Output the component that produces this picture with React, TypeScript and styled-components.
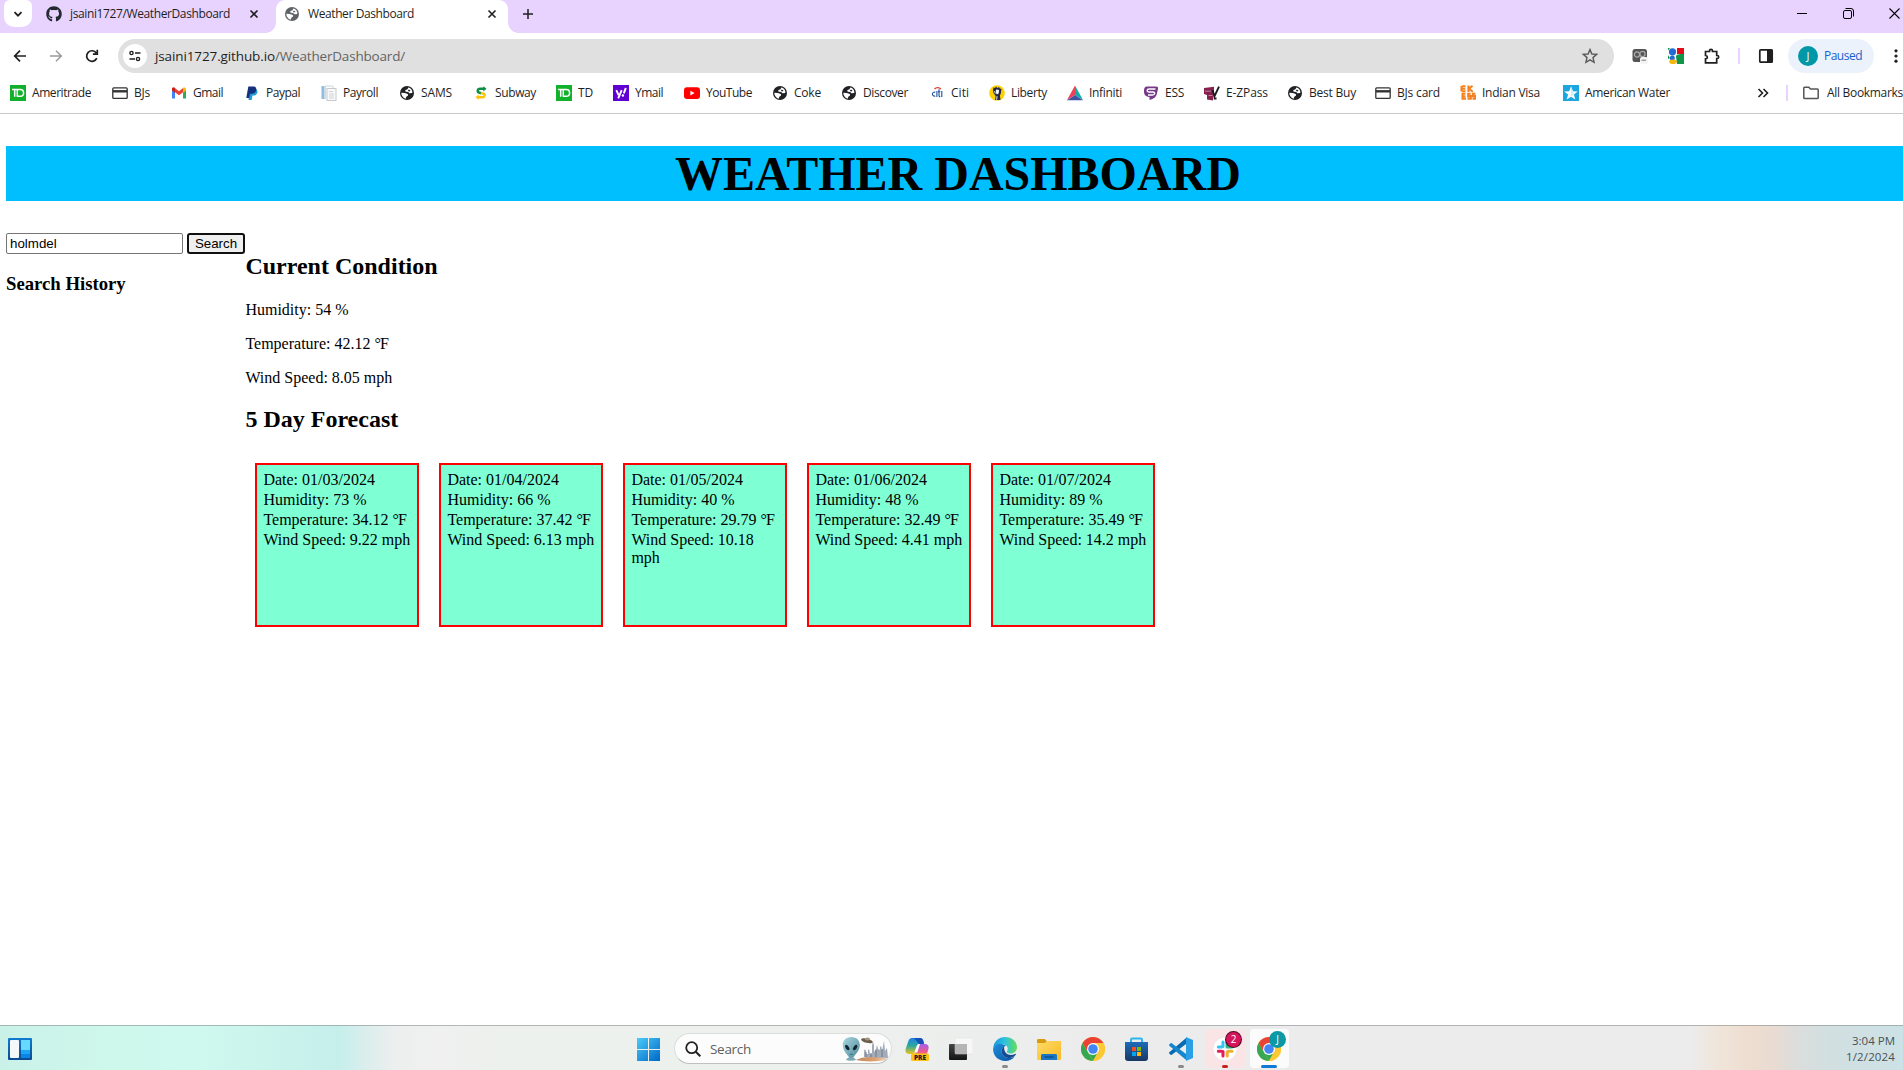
import React, { useLayoutEffect, useRef, useState } from 'react';
import styled, { createGlobalStyle, css } from 'styled-components';
import { FaGithub } from 'react-icons/fa';

const UI = `"Open Sans", "Noto Sans", "Liberation Sans", sans-serif`;
const SERIF = `"Liberation Serif", "Times New Roman", serif`;

const GlobalStyle = createGlobalStyle`
  html, body { margin: 0; padding: 0; overflow: hidden; background: #fff; }
  *, *::before, *::after { box-sizing: border-box; }
  svg { display: block; flex: none; }
`;

/* ---------- shared ---------- */

const Text = styled.span<{ $size?: number; $color?: string }>`
  display: inline-block;
  white-space: pre;
  font-family: ${UI};
  font-size: ${p => p.$size ?? 12}px;
  line-height: 16px;
  color: ${p => p.$color ?? '#1f1f1f'};
`;

/* Label whose tracking is adjusted so that it fills a given width. */
function Label({ width, size, color, children }: { width: number; size?: number; color?: string; children: React.ReactNode }) {
  const ref = useRef<HTMLSpanElement>(null);
  const [spacing, setSpacing] = useState(0);
  useLayoutEffect(() => {
    const el = ref.current;
    if (!el) return;
    const count = (el.textContent ?? '').length;
    setSpacing((width - el.getBoundingClientRect().width) / Math.max(1, count));
  }, [width]);
  return (
    <Text ref={ref} $size={size} $color={color} style={{ letterSpacing: `${spacing}px` }}>
      {children}
    </Text>
  );
}

/* ---------- browser frame ---------- */

const Screen = styled.div`
  width: 1903px;
  height: 1070px;
  display: flex;
  flex-direction: column;
  overflow: hidden;
  background: #fff;
`;

const TabStrip = styled.div`
  height: 33px;
  flex: none;
  display: flex;
  align-items: flex-start;
  background: #e8d3ff;
`;

const TabSearch = styled.div`
  width: 28px;
  height: 27px;
  margin-left: 4px;
  border-radius: 6px 6px 10px 10px;
  background: #fff;
  display: grid;
  place-items: center;
`;

const Tab = styled.div<{ $active?: boolean; $width: number }>`
  width: ${p => p.$width}px;
  height: 33px;
  display: flex;
  align-items: center;
  padding: ${p => (p.$active ? '0 11px 6px 8px' : '0 17px 6px 14px')};
  position: relative;
  ${p => p.$active && css`
    background: #fff;
    border-radius: 9px 9px 0 0;
    &::before, &::after {
      content: '';
      position: absolute;
      bottom: 0;
      width: 10px;
      height: 10px;
    }
    &::before { left: -10px; background: radial-gradient(circle at 0 0, #e8d3ff 9.5px, #fff 10px); }
    &::after { right: -10px; background: radial-gradient(circle at 100% 0, #e8d3ff 9.5px, #fff 10px); }
  `}
`;

const TabTitle = styled.div`
  flex: 1;
  margin-left: 8px;
  display: flex;
`;

const NewTab = styled.div`
  width: 28px;
  height: 27px;
  margin-left: 6px;
  display: grid;
  place-items: center;
`;

const WindowButtons = styled.div`
  margin-left: auto;
  margin-right: -14px;
  display: flex;
  height: 27px;
`;

const WindowButton = styled.div`
  width: 46px;
  display: grid;
  place-items: center;
`;

const Toolbar = styled.div`
  height: 46px;
  flex: none;
  display: flex;
  align-items: center;
  background: #fff;
  > * { flex: none; }
`;

const NavButton = styled.div`
  width: 36px;
  display: grid;
  place-items: center;
`;

const NavGroup = styled.div`
  display: flex;
  padding-left: 2px;
  width: 118px;
`;

const Omnibox = styled.div`
  width: 1496px;
  height: 34px;
  padding: 0 15px 0 5px;
  border-radius: 17px;
  background: #e0e0e0;
  display: flex;
  align-items: center;
  justify-content: space-between;
`;

const Address = styled.div`
  display: flex;
  align-items: center;
  gap: 8px;
`;

const SiteInfo = styled.div`
  width: 24px;
  height: 24px;
  border-radius: 50%;
  background: #fff;
  display: grid;
  place-items: center;
`;

const Extensions = styled.div`
  display: flex;
  padding-left: 8px;
`;

const Divider = styled.div<{ $gap: number }>`
  width: 2px;
  height: 16px;
  margin: 0 ${p => p.$gap}px;
  background: #e8d3ff;
`;

const Profile = styled.div`
  width: 86px;
  height: 34px;
  margin-left: 4px;
  padding-left: 10px;
  border-radius: 17px;
  background: #ebf2fb;
  display: flex;
  align-items: center;
  gap: 6px;
`;

const Avatar = styled.div`
  width: 20px;
  height: 20px;
  border-radius: 50%;
  background: #0097a7;
  color: #fff;
  font: 11px/20px ${UI};
  text-align: center;
`;

const Menu = styled.div`
  width: 44px;
  height: 20px;
  display: grid;
  place-items: center;
`;

const BookmarksBar = styled.div`
  height: 35px;
  flex: none;
  display: flex;
  align-items: center;
  padding: 0 0 6px 10px;
  border-bottom: 1px solid #c9c9c9;
  background: #fff;
  > * { flex: none; }
`;

const Bookmark = styled.div<{ $pitch: number }>`
  width: ${p => p.$pitch}px;
  display: flex;
  align-items: center;
  gap: 6px;
`;

const Overflow = styled.div`
  width: 16px;
  margin-left: 86px;
`;

const AllBookmarks = styled.div`
  display: flex;
  align-items: center;
  gap: 8px;
`;

/* ---------- icons ---------- */

const Icon = ({ size = 16, box = 16, children }: { size?: number; box?: number; children: React.ReactNode }) => (
  <svg width={size} height={size} viewBox={`0 0 ${box} ${box}`} fill="none">{children}</svg>
);

const Close = () => (
  <Icon size={10} box={10}><path d="M1.5 1.5l7 7M8.5 1.5l-7 7" stroke="#1f1f1f" strokeWidth="1.6" /></Icon>
);

const Globe = ({ color = '#202124' }: { color?: string }) => (
  <Icon>
    <circle cx="8" cy="8" r="7" fill={color} />
    <path d="M9.300 2.500l-.8 1.700-1.900.8c-.7.5-.4 1.600.5 1.800l2 .2 1.400 1.200 2.800-.3c.4-2.500-1.300-4.900-4-5.400z" fill="#fff" />
    <path d="M2.300 7.800l3.400.2 2.500.8c1.300.6 1.200 1.600.2 2.200l-1.100.8-.5 2C4.200 13.200 2.200 10.700 2.300 7.800z" fill="#fff" />
    <path d="M9.800 4.600l1.700.9-1.200.9-1.500-.3z" fill={color} />
  </Icon>
);

const TdIcon = () => (
  <Icon>
    <rect width="16" height="16" fill="#12b12c" />
    <path d="M2 4.400h6.500M4.700 4.400v7.300M7.300 4.400v7.300M7 11.200h3.200c2.200 0 3.400-1.200 3.400-3.300s-1.200-3.500-3.400-3.500H7.500" stroke="#fff" strokeWidth="1.500" />
  </Icon>
);

const CardIcon = () => (
  <Icon>
    <rect x=".8" y="2.800" width="14.400" height="10.600" rx="1" stroke="#333" strokeWidth="1.300" />
    <path d="M1 6.300h14" stroke="#333" strokeWidth="2.400" />
  </Icon>
);

const GmailIcon = () => (
  <Icon>
    <path d="M1 4v9.500h3V7z" fill="#4285f4" />
    <path d="M15 4v9.500h-3V7z" fill="#34a853" />
    <path d="M1 4c0-1.600 1.600-1.900 2.600-1.200L8 6.200l4.400-3.400V7L8 10.300 4 7.200 1 5.300z" fill="#ea4335" />
    <path d="M12 3.100c1.300-1 3-.4 3 1.200v1.200l-3 2.300z" fill="#fbbc04" />
    <path d="M1 4.300V5.500l3 2.300V3.100C2.600 2 1 2.700 1 4.300z" fill="#c5221f" />
  </Icon>
);

const PaypalIcon = () => (
  <Icon>
    <path d="M5.500 4h6.200c2 .7 2 2.600 1.400 4.200-.7 1.700-2.300 2.300-4.600 2.300L7.600 15H4.500z" fill="#1f9cd8" />
    <path d="M4.300 1.500h4.900c2.500 0 3.500 1.600 3 3.700-.5 2.400-2.200 3.500-4.600 3.500H6L5.200 13H2.300z" fill="#15317d" />
  </Icon>
);

const PayrollIcon = () => (
  <Icon>
    <rect x=".5" y="1" width="3" height="13" fill="#8fbde0" />
    <path d="M4.500 1h7.500v4M4.500 1v13" stroke="#cfd6dc" />
    <rect x="6" y="3.500" width="9" height="12" fill="#fafafa" stroke="#c4cad0" />
    <path d="M8 6.500h4M8 9h5M8 11h5M8 13h5" stroke="#cdd2d6" />
  </Icon>
);

const SubwayIcon = () => (
  <Icon>
    <path d="M11.500 3.800H7C4.300 3.800 4 6.800 6 7.500l2.500.8" stroke="#0a8f45" strokeWidth="2.400" />
    <path d="M10.300 1.200l3.200 2.600-3.200 2.600z" fill="#0a8f45" />
    <path d="M4.500 12.200h4.800c2.700 0 3-2.900 1-3.600L7.800 7.800" stroke="#ffc20a" strokeWidth="2.400" />
    <path d="M5.700 9.600l-3.200 2.600 3.200 2.600z" fill="#ffc20a" />
  </Icon>
);

const YahooIcon = () => (
  <Icon>
    <rect width="16" height="16" fill="#6001d2" />
    <path d="M3.300 5.200l2.300 5M8.700 5.200l-3.500 8.200" stroke="#fff" strokeWidth="1.900" />
    <path d="M12.800 3l-2 5.400" stroke="#fff" strokeWidth="2" />
    <circle cx="9.900" cy="10.500" r="1.200" fill="#fff" />
  </Icon>
);

const YoutubeIcon = () => (
  <Icon>
    <rect y="2.200" width="16" height="11.800" rx="3" fill="#f00" />
    <path d="M6.400 5.700l4.200 2.400-4.200 2.400z" fill="#fff" />
  </Icon>
);

const CitiIcon = () => (
  <Icon>
    <path d="M5.500 4.200c1.600-2.200 4.800-2.200 6.400 0" stroke="#e0352b" strokeWidth="1.200" />
    <path d="M6.300 7.300a2 2 0 1 0 0 3.600M7.900 6v6M10 4.300v6.200c0 1 .6 1.300 1.300 1M9 6.700h2.400M12.800 6v6" stroke="#1f4e9e" strokeWidth="1.100" />
  </Icon>
);

const LibertyIcon = () => (
  <Icon>
    <circle cx="8" cy="8" r="7.800" fill="#ffd000" />
    <path d="M4.500 2.500l1.500.5 1-1.500L8.200 3 10 2l.8 1.500 1.700.6-.7 4.400-.9 2 .6 4.500H6l.7-4L4.500 8l-.5-3z" fill="#22284c" />
    <path d="M7.300 5l2.300.2-.5 3.300-1.300.4zM5.700 6l.5 2.500M8 11.200l-.4 3.500" stroke="#fff" strokeWidth=".9" fill="#fff" />
  </Icon>
);

const InfinitiIcon = () => (
  <Icon>
    <path d="M8 .5L8 10 0 15z" fill="#ef4056" />
    <path d="M8 .5l8 14.500-8-5z" fill="#11ada5" />
    <path d="M8 10l8 5.300H0z" fill="#3f51a3" />
  </Icon>
);

const EssIcon = () => (
  <Icon>
    <path d="M4 1.500h9c2 0 2.300 1.300 2 2.500l-1.200 5C13 12.500 10 14 6.500 15V12C2 11.500.8 9 1 5.500c.1-2.500 1-4 3-4z" fill="#753a88" />
    <path d="M12.500 4H6.200C3.500 4 3.500 7 6 7h4c2.500 0 2 3-.5 3H5" stroke="#fff" strokeWidth="1.400" />
  </Icon>
);

const EzPassIcon = () => (
  <Icon>
    <path d="M0 3l10-1.200V8l-1 7.500-6-1V10L0 9z" fill="#86204f" />
    <path d="M1 6.200h6M4.500 10.500h4" stroke="#c98aa8" strokeWidth=".9" />
    <path d="M8.500 5.200l2 6L15 1.700M10 13.500h2.500" stroke="#1c1a1d" strokeWidth="1.900" />
  </Icon>
);

const IndianVisaIcon = () => (
  <Icon>
    <path d="M1.500 1v5.500M5.500 1.200H2M5.300 3.800H2M5.500 6.300H2M8.500.5v6.500M12.500.8L9 3.700l3.800 3M5.500 8.800H2.500v4.800h3.500M5.500 11.200H2M10.700 8.800H8.200v2.300h2.600v2.500H7.500M15.500 8.800h-2.600v2.300h2.600v2.500h-3" stroke="#f58220" strokeWidth="2.100" />
  </Icon>
);

const WaterIcon = () => (
  <Icon>
    <rect width="16" height="16" fill="#1ca6df" />
    <path d="M8 1.500l1.800 4.700 5 .2-3.900 3.200 1.400 5L8 11.800 3.700 14.600l1.400-5L1.200 6.400l5-.2z" fill="#fff" />
    <path d="M8 1.500v10.300l3.200-2.300z" fill="#d3effa" />
  </Icon>
);

const Star = () => (
  <Icon size={18} box={18}>
    <path d="M9 2.600l1.900 4.400 4.800.4-3.700 3.200 1.100 4.700L9 12.800l-4.100 2.500L6 10.600 2.300 7.400l4.800-.4z" stroke="#5a5a5a" strokeWidth="1.400" />
  </Icon>
);

const ChromeLogo = () => (
  <Icon size={24} box={24}>
    <circle cx="12" cy="12" r="12" fill="#fcc934" />
    <path d="M1.600 6L6.800 15 12 24A12 12 0 0 1 1.600 6z" fill="#34a853" />
    <path d="M6.800 15L12 24l5.200-9z" fill="#34a853" />
    <path d="M17.200 15L12 24A12 12 0 0 0 22.400 6H12z" fill="#fcc934" />
    <path d="M1.600 6A12 12 0 0 1 22.400 6H12L6.800 15z" fill="#ea4335" />
    <circle cx="12" cy="12" r="6" fill="#fff" />
    <circle cx="12" cy="12" r="4.800" fill="#4285f4" />
  </Icon>
);

/* ---------- page ---------- */

const Page = styled.main`
  flex: 1;
  padding: 32px 0 0 6px;
  overflow: hidden;
  font-family: ${SERIF};
  font-size: 16px;
  line-height: 18px;
  color: #000;
`;

const Banner = styled.h1`
  width: 1904px;
  height: 55px;
  margin: 0 0 32px;
  background: #00bfff;
  font-size: 48px;
  line-height: 55px;
  font-weight: 700;
  text-align: center;
`;

const Columns = styled.div`
  display: flex;
`;

const Sidebar = styled.aside`
  width: 239.4px;
`;

const SearchForm = styled.div`
  display: flex;
  gap: 4px;
  height: 21px;
`;

const SearchInput = styled.input`
  width: 177px;
  height: 21px;
  padding: 1px 3px;
  border: 1px solid #767676;
  border-radius: 2px;
  font: 13.333px "Liberation Sans", Arial, sans-serif;
  color: #000;
  background: #fff;
`;

const SearchButton = styled.button`
  width: 58px;
  height: 21px;
  padding: 0;
  border: 2px solid #101010;
  border-radius: 3px;
  background: #efefef;
  font: 13.333px "Liberation Sans", Arial, sans-serif;
  color: #000;
`;

const HistoryTitle = styled.h3`
  margin: 19px 0 0;
  font-size: 18.72px;
  line-height: 22px;
`;

const Content = styled.section`
  padding-top: 19px;
`;

const SectionTitle = styled.h2`
  margin: 0 0 20px;
  font-size: 24px;
  line-height: 28px;
`;

const Readings = styled.div`
  display: flex;
  flex-direction: column;
  gap: 16px;
  padding-top: 0.5px;
  margin-bottom: 18.5px;
`;

const Degree = styled.span`
  letter-spacing: -0.8px;
`;

const Forecast = styled.div`
  display: flex;
  gap: 20px;
  padding: 10px;
  margin-left: -0.4px;
`;

const DayCard = styled.div`
  width: 164px;
  height: 164px;
  padding: 6px 6px 6px 6.4px;
  border: 2px solid #f00;
  background: #7fffd4;
  display: flex;
  flex-direction: column;
  gap: 2px;
`;

/* ---------- taskbar ---------- */

const Taskbar = styled.footer`
  height: 45px;
  flex: none;
  display: flex;
  align-items: stretch;
  border-top: 1px solid rgba(120, 125, 125, 0.5);
  background: linear-gradient(90deg,
    #c9f1e8 0, #cff8ec 110px, #cff9ef 200px, #c8f2eb 290px, #c6efec 340px,
    #dceeec 368px, #ecefee 395px, #f0f0f0 430px, #ecf1ed 500px, #edf1ee 800px, #ececec 1100px,
    #ececec 1690px, #f0e4d9 1720px, #eeddd0 1750px, #e8dbd2 1775px, #dcdddc 1795px, #d2dfe1 1830px, #cce2e6 1903px);
`;

const Widgets = styled.div`
  width: 626px;
  padding: 12px 0 0 8px;
`;

const Slot = styled.div<{ $tint?: string }>`
  width: 44px;
  position: relative;
  display: flex;
  justify-content: center;
  padding-top: 11px;
  ${p => p.$tint && css`
    &::before {
      content: '';
      position: absolute;
      inset: 3px 2px 2px 3px;
      border-radius: 4px;
      background: ${p.$tint};
    }
  `}
  > svg { position: relative; }
`;

const Running = styled.i<{ $color: string; $width: number }>`
  position: absolute;
  bottom: 2px;
  left: ${p => 22 - p.$width / 2}px;
  width: ${p => p.$width}px;
  height: 3px;
  border-radius: 2px;
  background: ${p => p.$color};
`;

const Badge = styled.b<{ $bg: string; $edge: string; $shift: number }>`
  position: absolute;
  top: 6px;
  left: ${p => p.$shift}px;
  width: 15px;
  height: 15px;
  border-radius: 50%;
  background: ${p => p.$bg};
  box-shadow: 0 0 0 1px ${p => p.$edge};
  color: #fff;
  font: 10px/15px ${UI};
  text-align: center;
`;

const TaskSearch = styled.div`
  width: 218px;
  height: 31px;
  margin: 7px 3px 0 4px;
  padding: 0 2px 0 10px;
  border: 1px solid #dcdedd;
  border-bottom-color: #bfc1c0;
  border-radius: 16px;
  background: #fbfcfb;
  display: flex;
  align-items: center;
  gap: 9px;
  > svg:last-child { margin-left: auto; }
`;

const Clock = styled.div`
  margin-left: auto;
  padding: 7px 8px 0 0;
  display: flex;
  flex-direction: column;
  align-items: flex-end;
`;

/* ---------- data ---------- */

const bookmarks: [string, React.FC, number, number][] = [
  ['Ameritrade', TdIcon, 102, 59],
  ['BJs', CardIcon, 59, 16],
  ['Gmail', GmailIcon, 73, 30],
  ['Paypal', PaypalIcon, 77, 34],
  ['Payroll', PayrollIcon, 78, 35],
  ['SAMS', Globe, 74, 31],
  ['Subway', SubwayIcon, 83, 41],
  ['TD', TdIcon, 57, 15],
  ['Ymail', YahooIcon, 71, 28],
  ['YouTube', YoutubeIcon, 88, 46],
  ['Coke', Globe, 69, 27],
  ['Discover', Globe, 88, 45],
  ['Citi', CitiIcon, 60, 18],
  ['Liberty', LibertyIcon, 78, 36],
  ['Infiniti', InfinitiIcon, 76, 33],
  ['ESS', EssIcon, 61, 19],
  ['E-ZPass', EzPassIcon, 83, 42],
  ['Best Buy', Globe, 88, 47],
  ['BJs card', CardIcon, 85, 43],
  ['Indian Visa', IndianVisaIcon, 103, 58],
  ['American Water', WaterIcon, 106, 85],
];

const forecast = [
  ['01/03/2024', '73', '34.12', '9.22'],
  ['01/04/2024', '66', '37.42', '6.13'],
  ['01/05/2024', '40', '29.79', '10.18'],
  ['01/06/2024', '48', '32.49', '4.41'],
  ['01/07/2024', '89', '35.49', '14.2'],
];

function BrowserFrame() {
  return (
    <>
      <TabStrip>
        <TabSearch>
          <Icon size={12} box={12}><path d="M2.500 4.200L6 7.700l3.500-3.500" stroke="#1f1f1f" strokeWidth="1.800" /></Icon>
        </TabSearch>
        <Tab $width={244}>
          <FaGithub size={16} color="#24292f" />
          <TabTitle><Label width={160}>jsaini1727/WeatherDashboard</Label></TabTitle>
          <Close />
        </Tab>
        <Tab $active $width={232}>
          <Globe color="#5f6368" />
          <TabTitle><Label width={106}>Weather Dashboard</Label></TabTitle>
          <Close />
        </Tab>
        <NewTab>
          <Icon size={12} box={12}><path d="M6 1v10M1 6h10" stroke="#1f1f1f" strokeWidth="1.500" /></Icon>
        </NewTab>
        <WindowButtons>
          <WindowButton><Icon size={10} box={10}><path d="M0 4.500h10" stroke="#000" /></Icon></WindowButton>
          <WindowButton>
            <Icon size={11} box={11}>
              <rect x=".5" y="2.500" width="8" height="8" rx="1.500" stroke="#000" />
              <path d="M2.500.5H8A2.500 2.500 0 0 1 10.500 3v5.500" stroke="#000" />
            </Icon>
          </WindowButton>
          <WindowButton><Icon size={11} box={11}><path d="M.5.5l10 10M10.500.5l-10 10" stroke="#000" strokeWidth="1.100" /></Icon></WindowButton>
        </WindowButtons>
      </TabStrip>

      <Toolbar>
        <NavGroup>
          <NavButton><Icon><path d="M14 8H3M8 2.700L2.700 8 8 13.300" stroke="#1f1f1f" strokeWidth="1.700" /></Icon></NavButton>
          <NavButton><Icon><path d="M2 8h11M8 2.700L13.300 8 8 13.300" stroke="#9b9b9b" strokeWidth="1.500" /></Icon></NavButton>
          <NavButton><Icon><path d="M12.800 10.200A5.300 5.300 0 1 1 12.300 5M13.300 1.800v4.400H8.900" stroke="#1f1f1f" strokeWidth="1.700" /></Icon></NavButton>
        </NavGroup>
        <Omnibox>
          <Address>
            <SiteInfo>
              <Icon>
                <circle cx="4.500" cy="5" r="1.600" stroke="#1f1f1f" strokeWidth="1.400" />
                <circle cx="11" cy="11" r="1.600" stroke="#1f1f1f" strokeWidth="1.400" />
                <path d="M8 5h5.500M2.500 11h5.500" stroke="#1f1f1f" strokeWidth="1.500" />
              </Icon>
            </SiteInfo>
            <div>
              <Label width={120} size={13.500}>jsaini1727.github.io</Label>
              <Label width={130} size={13.500} color="#646464">/WeatherDashboard/</Label>
            </div>
          </Address>
          <Star />
        </Omnibox>
        <Extensions>
          <NavButton>
            <Icon>
              <rect x=".5" y="1" width="14.500" height="13" rx="2.500" fill="#555" />
              <circle cx="5" cy="6.500" r="2.600" stroke="#aaa" strokeWidth="1.200" />
              <circle cx="10.500" cy="6" r="2.600" stroke="#aaa" strokeWidth="1.200" />
              <rect x="8" y="9" width="8" height="7" rx="2" fill="#f4f4f4" />
              <path d="M9.500 12.200h4.500" stroke="#777" />
            </Icon>
          </NavButton>
          <NavButton>
            <Icon>
              <rect width="16" height="16" fill="#fff" />
              <path d="M9 0h7v6H9z" fill="#e50c1a" />
              <path d="M8 8.500c0-2 3-2.500 8-2.500v10h-7z" fill="#0f9648" />
              <circle cx="4.500" cy="3.800" r="3.600" fill="#2469d6" />
              <circle cx="4.300" cy="10" r="2.500" fill="#2469d6" />
              <path d="M0 0h2L0 2.500zM0 7l2 3-2 1z" fill="#0f9648" />
              <ellipse cx="5" cy="13.800" rx="3.800" ry="2.300" fill="#f6b60b" />
            </Icon>
          </NavButton>
          <NavButton>
            <Icon>
              <path d="M1.500 3.500h4v-.7a1.500 1.500 0 0 1 3 0v.7h4.200v4h.5a1.500 1.500 0 0 1 0 3h-.5v4.300H1.500v-4c2.500-.3 2.500-3 0-3.300z" stroke="#1f1f1f" strokeWidth="1.700" />
            </Icon>
          </NavButton>
        </Extensions>
        <Divider $gap={8} />
        <NavButton>
          <Icon>
            <rect x="1.800" y="1.800" width="12.400" height="12.400" rx="1" stroke="#1f1f1f" strokeWidth="1.700" />
            <path d="M9 1.500h5.500v13H9z" fill="#1f1f1f" />
          </Icon>
        </NavButton>
        <Profile>
          <Avatar>J</Avatar>
          <Label width={38} color="#1a5fd0">Paused</Label>
        </Profile>
        <Menu>
          <Icon>
            <circle cx="8" cy="2.800" r="1.600" fill="#1f1f1f" />
            <circle cx="8" cy="8" r="1.600" fill="#1f1f1f" />
            <circle cx="8" cy="13.200" r="1.600" fill="#1f1f1f" />
          </Icon>
        </Menu>
      </Toolbar>

      <BookmarksBar>
        {bookmarks.map(([name, Glyph, pitch, width], i) => (
          <Bookmark key={i} $pitch={pitch}>
            <Glyph />
            <Label width={width}>{name}</Label>
          </Bookmark>
        ))}
        <Overflow>
          <Icon><path d="M3.500 4l4 4-4 4M8.500 4l4 4-4 4" stroke="#1f1f1f" strokeWidth="1.600" /></Icon>
        </Overflow>
        <Divider $gap={15} />
        <AllBookmarks>
          <Icon><path d="M.8 3c0-.5.300-.8.800-.8h4.200l1.700 1.800h6.900c.5 0 .8.300.8.800v8c0 .5-.3.800-.8.800H1.600c-.5 0-.8-.3-.8-.8z" stroke="#555" strokeWidth="1.500" /></Icon>
          <Label width={76}>All Bookmarks</Label>
        </AllBookmarks>
      </BookmarksBar>
    </>
  );
}

function WeatherPage() {
  return (
    <Page>
      <Banner>WEATHER DASHBOARD</Banner>
      <Columns>
        <Sidebar>
          <SearchForm>
            <SearchInput defaultValue="holmdel" />
            <SearchButton>Search</SearchButton>
          </SearchForm>
          <HistoryTitle>Search History</HistoryTitle>
        </Sidebar>
        <Content>
          <SectionTitle>Current Condition</SectionTitle>
          <Readings>
            <div>Humidity: 54 %</div>
            <div>Temperature: 42.12 <Degree>°</Degree>F</div>
            <div>Wind Speed: 8.05 mph</div>
          </Readings>
          <SectionTitle>5 Day Forecast</SectionTitle>
          <Forecast>
            {forecast.map(([date, humidity, temp, wind]) => (
              <DayCard key={date}>
                <div>Date: {date}</div>
                <div>Humidity: {humidity} %</div>
                <div>Temperature: {temp} <Degree>°</Degree>F</div>
                <div>Wind Speed: {wind} mph</div>
              </DayCard>
            ))}
          </Forecast>
        </Content>
      </Columns>
    </Page>
  );
}

function WindowsTaskbar() {
  return (
    <Taskbar>
      <Widgets>
        <Icon size={24} box={24}>
          <defs>
            <linearGradient id="wg" x1="0" y1="0" x2="0" y2="1"><stop stopColor="#0f7bd0" /><stop offset="1" stopColor="#0a4a8f" /></linearGradient>
          </defs>
          <rect width="24" height="22" rx="1" fill="url(#wg)" />
          <rect x="2" y="2" width="9" height="18" rx="1" fill="#f6f7f8" />
          <path d="M13 2h9v10h-9z" fill="#66d9ff" />
          <path d="M13 12h9v4h-9z" fill="#1ea4f5" />
          <path d="M13 16h9v4h-9z" fill="#0b84e8" />
        </Icon>
      </Widgets>
      <Slot>
        <Icon size={24} box={24}>
          <defs>
            <linearGradient id="win" gradientUnits="userSpaceOnUse" x1="0" y1="0" x2="23" y2="24"><stop stopColor="#4fd0fb" /><stop offset="1" stopColor="#0069c8" /></linearGradient>
          </defs>
          <path d="M1 1h11v11H1zM13 1h11v11H13zM1 13h11v11H1zM13 13h11v11H13z" fill="url(#win)" />
        </Icon>
      </Slot>
      <TaskSearch>
        <Icon><circle cx="6.700" cy="6.700" r="5.500" stroke="#222" strokeWidth="1.800" /><path d="M10.800 10.800l4.500 4.500" stroke="#222" strokeWidth="2" /></Icon>
        <Label width={41} size={13.500} color="#606060">Search</Label>
        <svg width="47" height="26" viewBox="0 0 47 26">
          <defs>
            <linearGradient id="al" x1="0" y1="0" x2="1" y2="1"><stop stopColor="#a9d8e2" /><stop offset="1" stopColor="#4d8797" /></linearGradient>
            <linearGradient id="sand" x1="0" x2="1"><stop stopColor="#b98a66" /><stop offset=".6" stopColor="#e0a06b" /><stop offset="1" stopColor="#e9d6c4" /></linearGradient>
          </defs>
          <path d="M14 24c6-4 25-4.500 32-1-7 3-24 3-32 1z" fill="url(#sand)" />
          <path d="M22 21v-6l1-2 1 2v3h2v-4l1-1 1 5h2V9l1-3 1 3v7l2-3 1-4 1 4 2 1v-3l1-1 1 5 2-10 1 10 2-3 1 10z" fill="#a3abb8" />
          <path d="M24 21v-5M29 21v-4M34 21v-7M40 21v-8" stroke="#6e788a" />
          <ellipse cx="25" cy="4.800" rx="6" ry="2.100" transform="rotate(14 25 4.800)" fill="#6b5c4d" />
          <ellipse cx="25.500" cy="3" rx="2.600" ry="1.600" fill="#a39480" />
          <path d="M4 24c1-2 3-3 5-3s4 1 5 3c-3 1-7 1-10 0z" fill="#7aa7b2" />
          <path d="M9.300 1C4 1 .8 4.600.8 9c0 5.500 4 9 5.500 11.300C7.500 22.500 11 22.500 12.200 20.300 13.800 17.500 17.800 14.500 17.800 9c0-4.400-3.200-8-8.500-8z" fill="url(#al)" />
          <ellipse cx="5.200" cy="11.500" rx="1.600" ry="2.900" transform="rotate(-35 5.200 11.500)" fill="#10242c" />
          <ellipse cx="13.200" cy="11.500" rx="1.600" ry="2.900" transform="rotate(35 13.200 11.500)" fill="#10242c" />
          <path d="M7.800 18.300h3" stroke="#35606c" strokeWidth=".8" />
        </svg>
      </TaskSearch>
      <Slot>
        <Icon size={24} box={24}>
          <defs>
            <linearGradient id="cpa" x1="0" y1="0" x2="0" y2="1"><stop stopColor="#1f7fe8" /><stop offset=".5" stopColor="#2ea99a" /><stop offset="1" stopColor="#f2c41d" /></linearGradient>
            <linearGradient id="cpb" x1="0" y1="0" x2="0" y2="1"><stop stopColor="#a45cf0" /><stop offset=".6" stopColor="#ee5b8c" /><stop offset="1" stopColor="#f99a4a" /></linearGradient>
          </defs>
          <path d="M7 1h8c2 0 3 1.500 3.500 3.500L19 7h-4c-2 0-2.700 1-3.200 2.600L9.500 17H4C1 17 0 14.500.8 11.500L3.500 3.800C4.200 1.900 5.300 1 7 1z" fill="url(#cpa)" />
          <path d="M9 1h6c2 0 3 1.500 3.500 3.500L19 7h-5z" fill="#174fb8" />
          <path d="M15 7h5c3 0 4.200 2.300 3.400 5L21 20H9l3.500-11C13 7.700 13.700 7 15 7z" fill="url(#cpb)" />
          <path d="M15 7l-2.700 8.500H9.300L12 8.500C12.500 7.300 13.500 7 15 7z" fill="#fff" />
          <rect x="6" y="16.500" width="18" height="7.500" rx="1.500" fill="#fcc419" />
          <text x="15" y="22.800" textAnchor="middle" fontFamily="Open Sans, sans-serif" fontWeight="800" fontSize="6.500" fill="#222">PRE</text>
        </Icon>
      </Slot>
      <Slot>
        <Icon size={24} box={24}>
          <defs>
            <linearGradient id="tv" x1="0" y1="0" x2="0" y2="1"><stop stopColor="#454545" /><stop offset="1" stopColor="#141414" /></linearGradient>
          </defs>
          <rect y="7" width="18" height="16" rx="1" fill="url(#tv)" />
          <rect x="6" y="1" width="18" height="16" rx="1" fill="#f7f7f7" stroke="#dcdcdc" strokeWidth=".5" />
          <path d="M6 7h12v10H6z" fill="#b5b5b5" />
        </Icon>
      </Slot>
      <Slot>
        <Icon size={24} box={24}>
          <defs>
            <linearGradient id="ea" x1="0" y1="0" x2="1" y2="0"><stop stopColor="#1597e0" /><stop offset=".5" stopColor="#2fc3dc" /><stop offset="1" stopColor="#65dd57" /></linearGradient>
            <linearGradient id="eb" x1="0" y1="0" x2="1" y2="1"><stop stopColor="#1b8fdd" /><stop offset="1" stopColor="#0c54a2" /></linearGradient>
          </defs>
          <path d="M.2 11C.8 4.500 5.800 0 12 0c7 0 12 4.800 12 10.200 0 3.800-2.800 6.300-6.300 6.300-2.500 0-4-.9-4-1.700 0-.6 1-1.200 1-3C14.700 9 12 7 8.500 7 4.500 7 1.500 8.500.2 11z" fill="url(#ea)" />
          <path d="M.1 12.500C.1 8.500 4 6.500 8.500 7c2 .2 3.800 1 4.800 2-2.500 0-4.800 2.300-4.800 5.200 0 3.800 3.600 6.800 8 6.800 2.300 0 4.200-.9 5.200-1.500-2 2.900-5.600 4.500-9.500 4.500C5.500 24 .1 19 .1 12.500z" fill="url(#eb)" />
          <path d="M8.500 14.200c0-2 1-3.800 2.700-4.700-.6 5 2.500 8.500 7 8.500 1.800 0 3.300-.5 4.300-1.200.4-.3.700.1.500.5-1.400 2.500-4 3.700-6.500 3.700-4.400 0-8-3-8-6.800z" fill="#124b92" />
        </Icon>
        <Running $color="#8a8a8a" $width={6} />
      </Slot>
      <Slot>
        <Icon size={24} box={24}>
          <defs>
            <linearGradient id="fo" x1="0" y1="0" x2="1" y2="1"><stop stopColor="#ffdb68" /><stop offset="1" stopColor="#f9b924" /></linearGradient>
          </defs>
          <path d="M0 3.500C0 2.700.7 2 1.500 2h6.300L10 4.500V8H0z" fill="#d79a10" />
          <path d="M0 6h8l2-2h14v17.500c0 .8-.7 1.500-1.500 1.500h-21C.7 23 0 22.300 0 21.500z" fill="url(#fo)" />
          <path d="M4 23v-4.500C4 17.500 4.800 17 5.500 17h13c.8 0 1.500.5 1.500 1.500V23z" fill="#1976c5" />
          <path d="M7.500 20h9" stroke="#0e4f91" strokeWidth="1.600" />
        </Icon>
      </Slot>
      <Slot><ChromeLogo /></Slot>
      <Slot>
        <Icon size={24} box={24}>
          <defs>
            <linearGradient id="st" x1="0" y1="0" x2="0" y2="1"><stop stopColor="#1f6cba" /><stop offset="1" stopColor="#173863" /></linearGradient>
          </defs>
          <path d="M6 6V2.800c0-.8.500-1.300 1.300-1.300h8.400c.8 0 1.300.5 1.300 1.300V6" stroke="#2bb6ef" strokeWidth="2" />
          <path d="M0 5h23v16c0 1.800-1 3-3 3H3c-2 0-3-1.200-3-3z" fill="url(#st)" />
          <path d="M7 10h4v4H7z" fill="#f25022" />
          <path d="M12 10h4v4h-4z" fill="#7fba00" />
          <path d="M7 15h4v4H7z" fill="#00a4ef" />
          <path d="M12 15h4v4h-4z" fill="#ffb900" />
        </Icon>
      </Slot>
      <Slot>
        <Icon size={24} box={24}>
          <path d="M18 .2L.3 15.300c-.4.4-.4.900 0 1.200l1.300 1.200c.4.300.8.300 1.200 0L18 6.300z" fill="#0a6ab2" />
          <path d="M18 23.800L.3 8.700c-.4-.4-.4-.9 0-1.200l1.300-1.200c.4-.3.800-.3 1.200 0L18 17.700z" fill="#1587cf" />
          <path d="M17.500.2L24 3v18l-6.500 2.800c-.6 0-.5-.3-.5-.8V1c0-.5-.1-.8.500-.8z" fill="#2b9fe6" />
        </Icon>
        <Running $color="#8a8a8a" $width={6} />
      </Slot>
      <Slot $tint="#fbe4e6">
        <Icon size={24} box={24}>
          <circle cx="12" cy="12" r="12" fill="#fff" stroke="#e4dede" strokeWidth=".6" />
          <g strokeWidth="3" strokeLinecap="round">
            <path d="M10 5v4.500M5.300 10H8.500" stroke="#36c5f0" />
            <path d="M14 10V6M14.500 10H19" stroke="#2eb67d" />
            <path d="M5.300 14.200h3M10 14.500V19" stroke="#e01e5a" />
            <path d="M14.200 15v4M15 14.200h4" stroke="#ecb22e" />
          </g>
        </Icon>
        <Badge $bg="#d5145a" $edge="#4a0d26" $shift={23}>2</Badge>
        <Running $color="#c4221f" $width={6} />
      </Slot>
      <Slot $tint="#fbfbfb">
        <ChromeLogo />
        <Badge $bg="#0d98a5" $edge="#0d98a5" $shift={23}>J</Badge>
        <Running $color="#0f7ad4" $width={16} />
      </Slot>
      <Clock>
        <Label width={43} size={11.500} color="#4a5152">3:04 PM</Label>
        <Label width={49} size={11.500} color="#4a5152">1/2/2024</Label>
      </Clock>
    </Taskbar>
  );
}

export default function App() {
  return (
    <>
      <GlobalStyle />
      <Screen>
        <BrowserFrame />
        <WeatherPage />
        <WindowsTaskbar />
      </Screen>
    </>
  );
}
